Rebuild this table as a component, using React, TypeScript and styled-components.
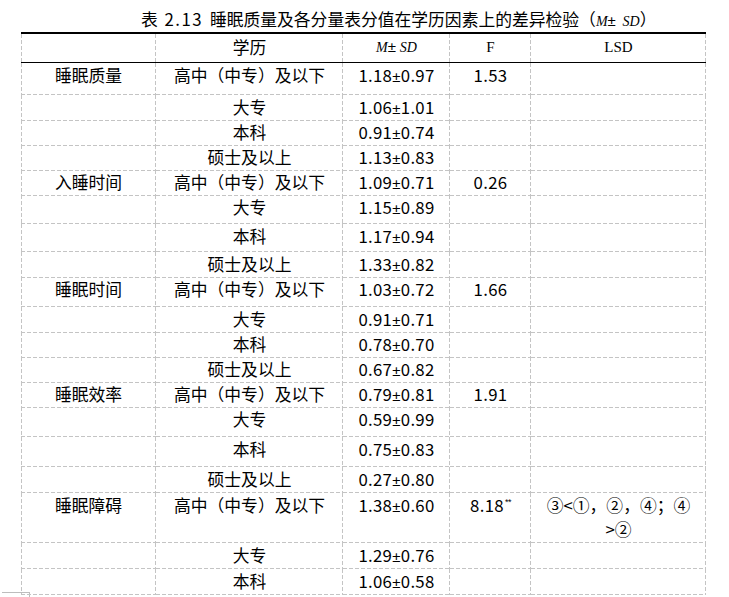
import React from "react";
import styled, { createGlobalStyle } from "styled-components";

const GlobalStyle = createGlobalStyle`
  html, body {
    margin: 0;
    padding: 0;
    background: #ffffff;
  }
  body {
    font-family: "Noto Sans CJK SC", "Noto Sans", sans-serif;
    color: #000000;
  }
`;

const LINE = "#c4c4c4";
const vDash = `repeating-linear-gradient(to bottom, ${LINE} 0 4px, transparent 4px 6px)`;
const hDash = `repeating-linear-gradient(to right, ${LINE} 0 4px, transparent 4px 6px)`;

const Page = styled.div`
  width: 729px;
  min-height: 597px;
`;

const Title = styled.div`
  box-sizing: border-box;
  height: 32px;
  padding: 7px 0 0 141px;
  font-size: 16.8px;
  line-height: 24px;
  white-space: nowrap;
  word-spacing: 3px;
`;

const TitleNum = styled.span`
  letter-spacing: 1.5px;
`;

const Italic = styled.span`
  font-family: "Liberation Serif", serif;
  font-style: italic;
  font-size: 14px;
`;

const Pm = styled.span`
  font-family: "Liberation Sans", sans-serif;
  font-size: 15px;
`;

const Table = styled.div`
  margin-left: 21px;
  width: 685px;
  border-top: 2px solid #000000;
`;

const Row = styled.div<{ $h: number; $head?: boolean }>`
  display: grid;
  grid-template-columns: 135px 187px 107px 81px 175px;
  box-sizing: border-box;
  height: ${(p) => p.$h}px;
  border-bottom: ${(p) => (p.$head ? "1px solid #000000" : "none")};
`;

const Cell = styled.div<{ $first?: boolean; $head?: boolean; $latin?: boolean }>`
  box-sizing: border-box;
  padding: ${(p) => (p.$head ? "1px 4px 0" : "0 4px")};
  text-align: center;
  font-size: ${(p) => (p.$latin ? "15px" : "16.8px")};
  font-family: ${(p) =>
    p.$latin ? '"Liberation Serif", serif' : '"Noto Sans CJK SC", sans-serif'};
  line-height: 24px;
  white-space: nowrap;
  background-image: ${vDash}, ${(p) => (p.$head ? "none" : hDash)},
    ${(p) => (p.$first ? vDash : "none")};
  background-size: 1px 100%, 100% 1px, 1px 100%;
  background-position: right top, left bottom, left top;
  background-repeat: no-repeat;
`;

const NumCell = styled(Cell)`
  letter-spacing: 0.3px;
`;

const Sup = styled.span`
  font-family: "Liberation Sans", sans-serif;
  font-size: 9px;
  line-height: 9px;
  position: relative;
  top: -7px;
  margin-left: 1px;
  letter-spacing: -0.5px;
`;

const Wrap = styled(Cell)`
  white-space: normal;
`;

const Corner = styled.div`
  box-sizing: border-box;
  margin-left: 2px;
  width: 28px;
  height: 5px;
  border-top: 1px solid #bdbdbd;
  border-right: 1px solid #bdbdbd;
`;

type Sub = [string, string, number];
type Group = { name: string; f: string; sig?: string; lsd?: boolean; rows: Sub[] };

const groups: Group[] = [
  {
    name: "睡眠质量",
    f: "1.53",
    rows: [
      ["高中（中专）及以下", "1.18±0.97", 32],
      ["大专", "1.06±1.01", 25],
      ["本科", "0.91±0.74", 25],
      ["硕士及以上", "1.13±0.83", 25],
    ],
  },
  {
    name: "入睡时间",
    f: "0.26",
    rows: [
      ["高中（中专）及以下", "1.09±0.71", 25],
      ["大专", "1.15±0.89", 29],
      ["本科", "1.17±0.94", 28],
      ["硕士及以上", "1.33±0.82", 25],
    ],
  },
  {
    name: "睡眠时间",
    f: "1.66",
    rows: [
      ["高中（中专）及以下", "1.03±0.72", 30],
      ["大专", "0.91±0.71", 25],
      ["本科", "0.78±0.70", 25],
      ["硕士及以上", "0.67±0.82", 25],
    ],
  },
  {
    name: "睡眠效率",
    f: "1.91",
    rows: [
      ["高中（中专）及以下", "0.79±0.81", 25],
      ["大专", "0.59±0.99", 30],
      ["本科", "0.75±0.83", 30],
      ["硕士及以上", "0.27±0.80", 26],
    ],
  },
  {
    name: "睡眠障碍",
    f: "8.18",
    sig: "**",
    lsd: true,
    rows: [
      ["高中（中专）及以下", "1.38±0.60", 50],
      ["大专", "1.29±0.76", 26],
      ["本科", "1.06±0.58", 23],
    ],
  },
];

function MeanSd({ value }: { value: string }) {
  const [m, sd] = value.split("±");
  return (
    <>
      {m}
      <Pm>±</Pm>
      {sd}
    </>
  );
}

export default function App() {
  return (
    <Page>
      <GlobalStyle />
      <Title>
        表 <TitleNum>2.13</TitleNum> 睡眠质量及各分量表分值在学历因素上的差异检验（
        <Italic>M</Italic>
        <Pm>±</Pm> <Italic>SD</Italic>）
      </Title>
      <Table>
        <Row $h={29} $head>
          <Cell $first $head />
          <Cell $head>学历</Cell>
          <Cell $head $latin>
            <Italic>M</Italic>
            <Pm>±</Pm> <Italic>SD</Italic>
          </Cell>
          <Cell $head $latin>F</Cell>
          <Cell $head $latin>LSD</Cell>
        </Row>
        {groups.map((g) =>
          g.rows.map((r, i) => (
            <Row key={g.name + i} $h={r[2]}>
              <Cell $first>{i === 0 ? g.name : ""}</Cell>
              <Cell>{r[0]}</Cell>
              <NumCell>
                <MeanSd value={r[1]} />
              </NumCell>
              <NumCell>
                {i === 0 ? g.f : ""}
                {i === 0 && g.sig ? <Sup>{g.sig}</Sup> : null}
              </NumCell>
              {i === 0 && g.lsd ? (
                <Wrap>
                  ③&lt;①，②，④；④
                  <br />
                  &gt;②
                </Wrap>
              ) : (
                <Cell />
              )}
            </Row>
          ))
        )}
      </Table>
      <Corner />
    </Page>
  );
}
